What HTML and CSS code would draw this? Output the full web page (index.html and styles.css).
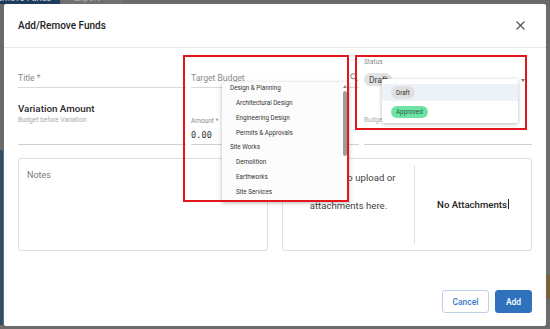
FILE: index.html
```html
<!DOCTYPE html>
<html>
<head>
<meta charset="utf-8">
<link rel="stylesheet" href="styles.css">
</head>
<body>
<div class="app">
  <div class="app-top">
    <div class="app-tab active"><span class="tab-text">Remove Funds</span></div>
    <div class="app-tab"><span class="tab-text">Export</span></div>
  </div>
  <div class="app-main">
    <div class="app-side"></div>
    <div class="app-fill"></div>
    <div class="app-right"><div class="app-right-block"></div></div>
  </div>
</div>

<div class="modal">
  <header class="modal-head">
    <h1 class="modal-title">Add/Remove Funds</h1>
    <button class="close" aria-label="Close">
      <svg width="9" height="9" viewBox="0 0 9 9"><path d="M0.5 0.5L8.5 8.5M8.5 0.5L0.5 8.5" stroke="#555" stroke-width="1.2" fill="none"/></svg>
    </button>
  </header>

  <div class="modal-body">
    <div class="fields">
      <div class="col">
        <div class="field"><span class="label">Title *</span></div>
        <div class="variation">
          <div class="v-title">Variation Amount</div>
          <div class="v-sub">Budget before Variation</div>
        </div>
      </div>
      <div class="col">
        <div class="field">
          <span class="label">Target Budget</span>
          <svg class="search" width="8" height="8" viewBox="0 0 8 8"><circle cx="3.3" cy="3.3" r="2.6" stroke="#777" stroke-width="1" fill="none"/><path d="M5.2 5.2L7.6 7.6" stroke="#777" stroke-width="1.1"/></svg>
        </div>
        <div class="amount">
          <div class="small-label">Amount *</div>
          <div class="amount-value">0.00</div>
        </div>
      </div>
      <div class="col">
        <div class="status">
          <div class="small-label">Status</div>
          <div class="status-row">
            <span class="chip chip-main">Draft</span>
            <span class="caret"></span>
          </div>
        </div>
        <div class="budget-after">
          <div class="small-label">Budget after Variation</div>
        </div>
      </div>
    </div>

    <div class="boxes">
      <div class="box notes"><span class="notes-label">Notes</span></div>
      <div class="box attach">
        <div class="drop">Drop files to upload or<br>attachments here.</div>
        <div class="divider"></div>
        <div class="none">No Attachments<span class="cursor"></span></div>
      </div>
    </div>
  </div>

  <footer class="modal-foot">
    <button class="btn cancel">Cancel</button>
    <button class="btn add">Add</button>
  </footer>

  <div class="menu budget-menu">
    <ul class="menu-list">
      <li class="grp">Design &amp; Planning</li>
      <li class="sub">Architectural Design</li>
      <li class="sub">Engineering Design</li>
      <li class="sub">Permits &amp; Approvals</li>
      <li class="grp">Site Works</li>
      <li class="sub">Demolition</li>
      <li class="sub">Earthworks</li>
      <li class="sub">Site Services</li>
    </ul>
    <div class="scrollbar">
      <span class="sb-up"></span>
      <span class="sb-thumb"></span>
    </div>
  </div>

  <div class="menu status-menu">
    <div class="opt opt-active"><span class="chip chip-draft">Draft</span></div>
    <div class="opt"><span class="chip chip-approved">Approved</span></div>
  </div>

  <div class="mark mark-1"></div>
  <div class="mark mark-2"></div>
</div>
</body>
</html>
```

FILE: styles.css
```css
* { box-sizing: border-box; }
html, body { margin: 0; padding: 0; }
body {
  width: 550px;
  height: 329px;
  overflow: hidden;
  position: relative;
  background: #6b6b6b;
  font-family: Roboto, "Liberation Sans", sans-serif;
}

/* dimmed app behind */
.app { display: flex; flex-direction: column; height: 329px; }
.app-top { display: flex; height: 4px; overflow: hidden; }
.app-tab {
  width: 60px; height: 4px;
  overflow: hidden;
  background: #707070;
}
.tab-text {
  display: block;
  margin-top: -8px;
  margin-left: -8px;
  font-size: 9px; line-height: 12px; color: #a9a9a9;
  white-space: nowrap;
}
.app-tab.active { background: #1d3c5c; margin-right: 2px; }
.app-tab.active .tab-text { color: #c9d2dc; }
.app-tab:not(.active) .tab-text { margin-left: 12px; }
.app-main { flex: 1; display: flex; }
.app-side { width: 3px; margin-top: 146px; margin-bottom: 4px; background: #2c4f6c; }
.app-fill { flex: 1; }
.app-right { width: 4px; display: flex; flex-direction: column; justify-content: flex-end; padding-bottom: 30px; }
.app-right-block { height: 24px; background: #7a6238; }

/* modal */
.modal {
  position: absolute;
  left: 4px; top: 4px;
  width: 542px; height: 322px;
  background: #fff;
  border-radius: 2px;
  display: flex;
  flex-direction: column;
}
.modal-head {
  height: 44px;
  flex: none;
  display: flex;
  align-items: center;
  justify-content: space-between;
  padding: 0 21px 0 14px;
  border-bottom: 1px solid #e7e7e7;
}
.modal-title {
  margin: 0;
  font-size: 10px;
  font-weight: 500;
  color: #222;
}
.close {
  border: 0; background: none; padding: 0; width: 9px; height: 9px;
  display: flex;
}

.modal-body { padding: 0 14px; }

.fields {
  display: grid;
  grid-template-columns: 1fr 1fr 1fr;
  column-gap: 5px;
  height: 97px;
}
.col { display: flex; flex-direction: column; }
.field {
  position: relative;
  padding-top: 24px;
  padding-bottom: 3px;
  border-bottom: 1px solid #d9d9d9;
  display: flex;
  align-items: center;
  justify-content: space-between;
}
.label { font-size: 8.6px; line-height: 12px; color: #8a8a8a; }
.search { margin-right: 1px; margin-top: -2px; }

.variation {
  flex: 1;
  padding-top: 14px;
  border-bottom: 1px solid #d0d0d0;
}
.v-title { font-size: 9.8px; line-height: 13px; font-weight: 500; color: #2a2a2a; }
.v-sub { font-size: 6.5px; line-height: 8px; margin-top: 1px; color: #a8a8a8; }

.amount {
  flex: 1;
  display: flex; flex-direction: column; justify-content: flex-end;
  padding-bottom: 3px;
  border-bottom: 1px solid #d0d0d0;
}
.small-label { font-size: 6.5px; line-height: 9px; color: #8a8a8a; }
.amount-value {
  margin-top: 3px;
  font-family: "DejaVu Sans Mono", "Liberation Mono", monospace;
  font-size: 8.5px; line-height: 12px; color: #333; letter-spacing: 0.1px;
}

.status { padding-top: 10px; }
.status-row { display: flex; align-items: center; justify-content: space-between; margin-top: 6px; padding-right: 7px; }
.chip {
  display: inline-flex; align-items: center;
  border-radius: 7px;
  color: #444;
}
.chip-main { height: 13px; padding: 0 5px 0 5px; font-size: 8.5px; background: #e2e2e2; width: 28px; }
.caret { width: 0; height: 0; border-left: 2.5px solid transparent; border-right: 2.5px solid transparent; border-top: 3px solid #777; margin-top: 1px; }
.budget-after {
  flex: 1;
  display: flex; flex-direction: column; justify-content: flex-end;
  padding-bottom: 19px;
  border-bottom: 1px solid #d0d0d0;
}
.budget-after .small-label { color: #aaa; }

.boxes {
  display: grid;
  grid-template-columns: 1fr 1fr;
  column-gap: 14px;
  margin-top: 13px;
  height: 93px;
}
.box {
  border: 1px solid #dedede;
  border-radius: 3px;
}
.notes { padding: 10px 8px; font-size: 9px; line-height: 12px; }
.notes-label { color: #7a7a7a; }
.attach { display: flex; align-items: stretch; padding: 6px 0; }
.drop {
  flex: 0 0 131px;
  text-align: center;
  font-size: 9.6px; line-height: 28px; color: #444;
  margin-top: -1px;
}
.divider { width: 1px; background: #e0e0e0; }
.none {
  flex: 1;
  display: flex; align-items: center; justify-content: center;
  font-size: 9.6px; font-weight: 500; color: #222;
  padding-bottom: 1px;
}
.cursor { display: inline-block; width: 1px; height: 10px; background: #222; margin-left: 1px; }

.modal-foot {
  margin-top: auto;
  display: flex;
  justify-content: flex-end;
  gap: 6px;
  padding: 0 14px 13px;
}
.btn {
  height: 23px;
  border-radius: 3px;
  font-family: Roboto, "Liberation Sans", sans-serif;
  font-size: 8.5px;
  font-weight: 500;
  padding: 0;
}
.cancel { width: 47px; background: #fff; border: 1px solid #bcd2ec; color: #3b7bc6; }
.add { width: 37px; background: #2f71bd; border: 1px solid #2f71bd; color: #fff; }

/* dropdown menus (overlays) */
.menu {
  position: absolute;
  background: #fff;
  box-shadow: 0 1px 4px rgba(0,0,0,0.28);
}
.budget-menu {
  left: 218px; top: 78px;
  width: 127px; height: 120px;
  overflow: hidden;
  background: #fcfcfc;
}
.menu-list {
  list-style: none; margin: -1px 0 0; padding: 0;
}
.menu-list li {
  height: 14.85px; line-height: 14.85px;
  font-size: 6.3px; color: #333;
  white-space: nowrap;
}
.menu-list .grp { padding-left: 8px; }
.menu-list .sub { padding-left: 14px; }
.scrollbar {
  position: absolute;
  right: 1px; top: 0; bottom: 0; width: 6px;
  display: flex; flex-direction: column; align-items: center;
}
.sb-up {
  margin-top: 3px;
  width: 0; height: 0;
  border-left: 2px solid transparent; border-right: 2px solid transparent;
  border-bottom: 3px solid #888;
}
.sb-thumb {
  margin-top: 3px;
  width: 4px; height: 65px; border-radius: 2px; background: #9c9c9c;
}

.status-menu {
  left: 378px; top: 75px;
  width: 136px; height: 44px;
  padding-top: 5px;
  border-radius: 2px;
}
.opt { height: 17px; display: flex; align-items: center; padding-left: 9px; }
.opt-active { background: #edf2f9; }
.chip-draft { height: 13px; padding: 0 5px; font-size: 6.3px; background: #e0e0e0; color: #333; }
.chip-approved { height: 12px; padding: 0 5px; font-size: 6.3px; background: #6fe3a6; color: #1d5b3a; margin-top: 4px; }

/* annotation frames */
.mark {
  position: absolute;
  border: 2px solid #e3161e;
  pointer-events: none;
}
.mark-1 { left: 179px; top: 51px; width: 166px; height: 147px; }
.mark-2 { left: 351px; top: 51px; width: 172px; height: 75px; }
```
